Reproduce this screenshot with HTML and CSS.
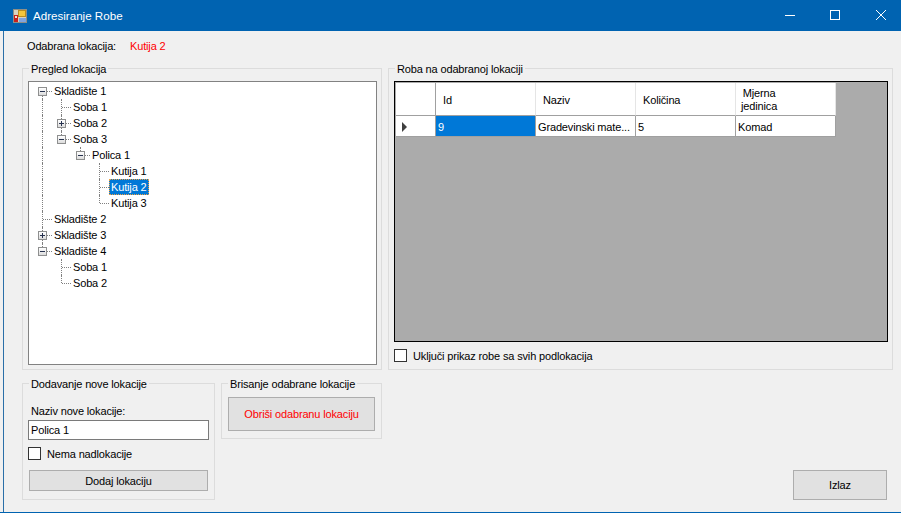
FILE: index.html
```html
<!DOCTYPE html>
<html lang="en">
<head>
    <meta charset="UTF-8">
    <meta name="viewport" content="width=device-width, initial-scale=1.0">
    <title>Adresiranje Robe</title>
    <link rel="stylesheet" href="styles.css">
</head>
<body>
    <div class="window">
        <header class="titlebar">
            <svg class="app-icon" width="14" height="14" viewBox="0 0 14 14">
                <rect x="0.5" y="0.5" width="13" height="13" fill="#d9d3c0" stroke="#8f8f86"/>
                <rect x="1" y="6" width="4" height="7" fill="#c8201c"/>
                <rect x="2" y="7" width="2" height="2" fill="#f4e0d0"/>
                <rect x="5.5" y="1.5" width="7" height="6" fill="#f5c63c" stroke="#b98c20"/>
                <rect x="6" y="9" width="7" height="4" fill="#7fa4e0"/>
            </svg>
            <span class="title">Adresiranje Robe</span>
            <div class="caption-buttons">
                <svg width="46" height="31" viewBox="0 0 46 31"><path d="M19 15.5h10" stroke="#fff" fill="none"/></svg>
                <svg width="46" height="31" viewBox="0 0 46 31"><rect x="18.5" y="10.5" width="9" height="9" stroke="#fff" fill="none"/></svg>
                <svg width="46" height="31" viewBox="0 0 46 31"><path d="M18 10l10 10M28 10l-10 10" stroke="#fff" fill="none"/></svg>
            </div>
        </header>

        <div class="content">
            <div class="selected-row">
                <span class="selected-label">Odabrana lokacija:</span>
                <span class="red">Kutija 2</span>
            </div>

            <div class="columns">
                <div class="left-col">
                    <fieldset class="group tree-group">
                        <legend>Pregled lokacija</legend>
                        <div class="tree">
                            <div class="node"><i class="cell root"><b class="box minus"></b></i><span class="text">Skladište 1</span></div>
                            <div class="node"><i class="cell pass"></i><i class="cell tee"></i><span class="text">Soba 1</span></div>
                            <div class="node"><i class="cell pass"></i><i class="cell tee"><b class="box plus"></b></i><span class="text">Soba 2</span></div>
                            <div class="node"><i class="cell pass"></i><i class="cell elbow"><b class="box minus"></b></i><span class="text">Soba 3</span></div>
                            <div class="node"><i class="cell pass"></i><i class="cell"></i><i class="cell elbow"><b class="box minus"></b></i><span class="text">Polica 1</span></div>
                            <div class="node"><i class="cell pass"></i><i class="cell"></i><i class="cell"></i><i class="cell tee"></i><span class="text">Kutija 1</span></div>
                            <div class="node"><i class="cell pass"></i><i class="cell"></i><i class="cell"></i><i class="cell tee"></i><span class="text selected">Kutija 2</span></div>
                            <div class="node"><i class="cell pass"></i><i class="cell"></i><i class="cell"></i><i class="cell elbow"></i><span class="text">Kutija 3</span></div>
                            <div class="node"><i class="cell tee"></i><span class="text">Skladište 2</span></div>
                            <div class="node"><i class="cell tee"><b class="box plus"></b></i><span class="text">Skladište 3</span></div>
                            <div class="node"><i class="cell elbow"><b class="box minus"></b></i><span class="text">Skladište 4</span></div>
                            <div class="node"><i class="cell"></i><i class="cell tee"></i><span class="text">Soba 1</span></div>
                            <div class="node"><i class="cell"></i><i class="cell elbow"></i><span class="text">Soba 2</span></div>
                        </div>
                    </fieldset>

                    <div class="bottom-groups">
                        <fieldset class="group add-group">
                            <legend>Dodavanje nove lokacije</legend>
                            <label class="field-label" for="naziv">Naziv nove lokacije:</label>
                            <input class="text-input" id="naziv" type="text" value="Polica 1">
                            <label class="check add-check"><span class="checkbox"></span>Nema nadlokacije</label>
                            <button class="btn add-btn" type="button">Dodaj lokaciju</button>
                        </fieldset>
                        <fieldset class="group delete-group">
                            <legend>Brisanje odabrane lokacije</legend>
                            <button class="btn delete-btn red" type="button">Obriši odabranu lokaciju</button>
                        </fieldset>
                    </div>
                </div>

                <div class="right-col">
                    <fieldset class="group goods-group">
                        <legend>Roba na odabranoj lokaciji</legend>
                        <div class="grid">
                            <div class="grid-table">
                                <div class="hd corner"></div>
                                <div class="hd">Id</div>
                                <div class="hd">Naziv</div>
                                <div class="hd">Količina</div>
                                <div class="hd wrapped"><span>Mjerna<br>jedinica</span></div>
                                <div class="td row-head"><span class="arrow"></span></div>
                                <div class="td current">9</div>
                                <div class="td">Gradevinski mate...</div>
                                <div class="td">5</div>
                                <div class="td">Komad</div>
                            </div>
                        </div>
                        <label class="check goods-check"><span class="checkbox"></span>Uključi prikaz robe sa svih podlokacija</label>
                    </fieldset>
                    <div class="exit-row">
                        <button class="btn exit-btn" type="button">Izlaz</button>
                    </div>
                </div>
            </div>
        </div>
    </div>
</body>
</html>
```

FILE: styles.css
```css
html, body {
    margin: 0;
    height: 100%;
    overflow: hidden;
}
body {
    font-family: "Liberation Sans", Arial, sans-serif;
    font-size: 11px;
    letter-spacing: -0.15px;
    color: #000;
    background-color: #f0f0f0;
}
.window {
    height: 513px;
    box-sizing: border-box;
    border-bottom: 1px solid #0063b1;
}
.titlebar {
    display: flex;
    align-items: center;
    height: 31px;
    background-color: #0063b1;
    color: white;
    padding-left: 13px;
}
.app-icon {
    margin-right: 6px;
}
.title {
    font-size: 11.6px;
    letter-spacing: 0;
}
.caption-buttons {
    display: flex;
    margin-left: auto;
    margin-right: -3px;
}
.content {
    height: 481px;
    box-sizing: border-box;
    margin-left: 3px;
    padding: 0 8px 0 18px;
    border-left: 1px solid #2a6fa8;
}
.selected-row {
    display: flex;
    box-sizing: border-box;
    height: 29px;
    align-items: center;
    padding: 1px 0 0 5px;
}
.selected-label {
    width: 103px;
}
.red {
    color: #ff0000;
}
.columns {
    display: flex;
    gap: 6px;
}
.left-col {
    width: 360px;
}
.right-col {
    width: 505px;
}

.group {
    margin: 0;
    min-width: 0;
    box-sizing: border-box;
    border: 1px solid #dcdcdc;
    padding: 0;
}
.group legend {
    margin-left: 1px;
    padding: 2px 2px 0 2px;
    line-height: 14px;
    white-space: nowrap;
}

.tree-group {
    height: 310px;
    padding: 5px 4px 0 5px;
}
.tree {
    box-sizing: border-box;
    height: 284px;
    border: 1px solid #828282;
    background-color: white;
    padding: 1px 0 0 4px;
}
.node {
    display: flex;
    height: 16px;
    line-height: 16px;
}
.cell {
    position: relative;
    flex: none;
    width: 19px;
    height: 16px;
}
.cell.pass::before,
.cell.tee::before,
.cell.elbow::before,
.cell.root::before {
    content: "";
    position: absolute;
    left: 9px;
    top: 0;
    height: 16px;
    border-left: 1px dotted #808080;
}
.cell.elbow::before {
    height: 8px;
}
.cell.root::before {
    top: 8px;
    height: 8px;
}
.cell.tee::after,
.cell.elbow::after,
.cell.root::after {
    content: "";
    position: absolute;
    left: 10px;
    top: 8px;
    width: 9px;
    border-top: 1px dotted #808080;
}
.box {
    position: absolute;
    z-index: 1;
    left: 5px;
    top: 4px;
    box-sizing: border-box;
    width: 9px;
    height: 9px;
    border: 1px solid #8e8f8f;
}
.box.minus {
    background: linear-gradient(#27324f, #27324f) center / 5px 1px no-repeat, linear-gradient(#ffffff, #dcdcdc);
}
.box.plus {
    background: linear-gradient(#27324f, #27324f) center / 5px 1px no-repeat, linear-gradient(#27324f, #27324f) center / 1px 5px no-repeat, linear-gradient(#ffffff, #dcdcdc);
}
.text {
    padding: 0 2px;
    white-space: nowrap;
}
.text.selected {
    box-sizing: border-box;
    height: 16px;
    line-height: 14px;
    background-color: #0078d7;
    color: white;
    padding: 0 1px;
    border: 1px dotted #f0a040;
}

.bottom-groups {
    display: flex;
    align-items: flex-start;
    gap: 6px;
    margin-top: 5px;
}
.add-group {
    width: 193px;
    height: 125px;
    padding: 13px 5px 0 5px;
}
.delete-group {
    width: 161px;
    height: 64px;
    padding: 6px 6px 0 6px;
}
.delete-group legend {
    margin-left: 0;
}
.field-label {
    display: block;
    height: 14px;
    line-height: 14px;
    margin-left: 3px;
}
.text-input {
    display: block;
    box-sizing: border-box;
    width: 181px;
    height: 20px;
    margin-top: 2px;
    padding: 0 2px;
    border: 1px solid #7a7a7a;
    background-color: white;
    font: inherit;
    letter-spacing: inherit;
    color: #000;
    outline: none;
}
.check {
    display: flex;
    align-items: center;
    gap: 6px;
    height: 13px;
}
.checkbox {
    display: block;
    box-sizing: border-box;
    width: 13px;
    height: 13px;
    border: 1px solid #333;
    background-color: white;
}
.add-check {
    margin-top: 7px;
}
.btn {
    display: block;
    box-sizing: border-box;
    padding: 0;
    border: 1px solid #adadad;
    background-color: #e1e1e1;
    font: inherit;
    letter-spacing: inherit;
    color: #000;
}
.btn.red {
    color: #ff0000;
}
.add-btn {
    width: 179px;
    height: 21px;
    margin: 10px 0 0 1px;
}
.delete-btn {
    width: 147px;
    height: 34px;
}

.goods-group {
    height: 310px;
    padding: 5px 4px 0 5px;
}
.grid {
    box-sizing: border-box;
    height: 261px;
    border: 1px solid #000;
    background-color: #ababab;
    padding: 1px 0 0 1px;
}
.grid-table {
    display: grid;
    grid-template-columns: 40px 100px 100px 100px 100px;
    grid-template-rows: 33px 21px;
    width: 440px;
}
.hd, .td {
    box-sizing: border-box;
    background-color: white;
    padding-top: 2px;
}
.hd {
    display: flex;
    align-items: center;
    padding-left: 7px;
    border-right: 1px solid #e5e5e5;
    border-bottom: 1px solid #a0a0a0;
    line-height: 13px;
}
.hd.corner {
    border-right-color: #a0a0a0;
}
.hd.wrapped {
    padding-left: 5px;
    text-align: center;
}
.td {
    display: flex;
    align-items: center;
    padding-left: 2px;
    border-right: 1px solid #a0a0a0;
    border-bottom: 1px solid #a0a0a0;
    white-space: nowrap;
    overflow: hidden;
}
.td.current {
    background-color: #0078d7;
    color: white;
}
.row-head {
    padding-left: 6px;
}
.arrow {
    display: block;
    border-left: 5px solid #404040;
    border-top: 5px solid transparent;
    border-bottom: 5px solid transparent;
}
.goods-check {
    margin-top: 7px;
}
.exit-row {
    display: flex;
    justify-content: flex-end;
    margin: 100px 6px 0 0;
}
.exit-btn {
    width: 94px;
    height: 30px;
}
```
